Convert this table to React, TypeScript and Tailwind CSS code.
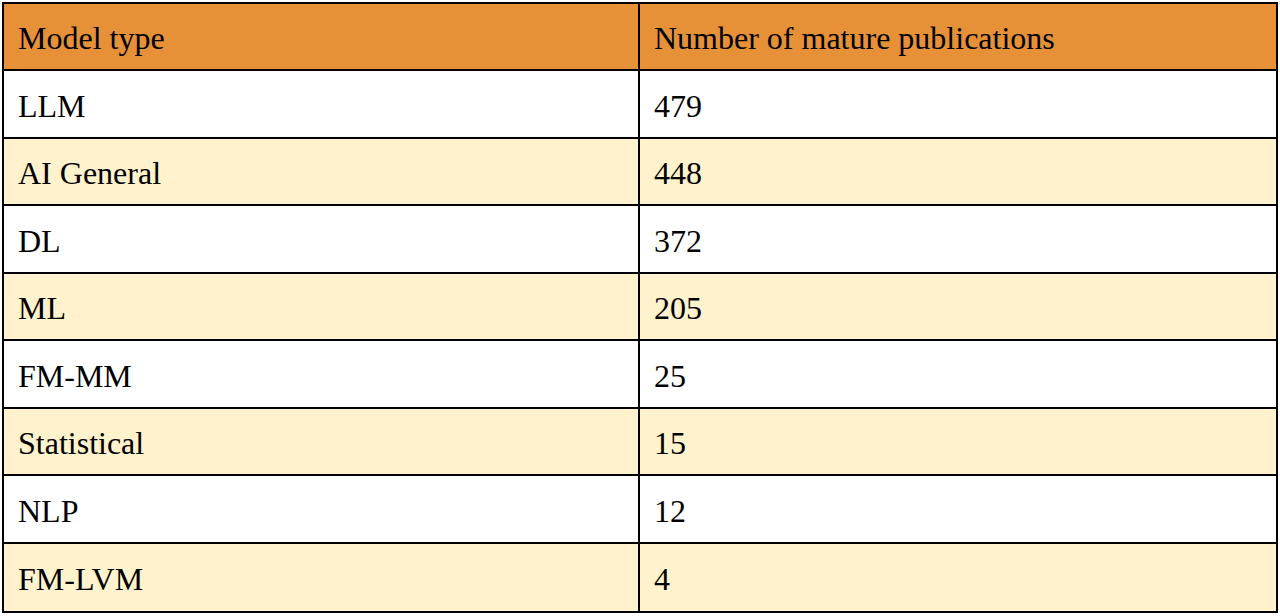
import React from "react";

const rows: [string, string][] = [
  ["LLM", "479"],
  ["AI General", "448"],
  ["DL", "372"],
  ["ML", "205"],
  ["FM-MM", "25"],
  ["Statistical", "15"],
  ["NLP", "12"],
  ["FM-LVM", "4"],
];

export default function App() {
  return (
    <div
      className="w-[1280px] h-[616px] bg-white pl-[2px] pt-[2px]"
      style={{ fontFamily: '"Liberation Serif", "Times New Roman", serif' }}
    >
      <div className="w-[1276px] border-2 border-black text-[32px] text-black leading-none">
        <div className="flex h-[67px] bg-[#e69138] border-b-2 border-black">
          <div className="w-[636px] border-r-2 border-black flex items-center pl-[14px] pt-[3px]">Model type</div>
          <div className="flex-1 flex items-center pl-[14px] pt-[3px]">Number of mature publications</div>
        </div>
        {rows.map(([a, b], i) => (
          <div
            key={a}
            className={`flex ${i % 2 === 0 ? "h-[68px]" : "h-[67px]"} ${i % 2 === 1 ? "bg-[#fff2cc]" : "bg-white"} ${i < rows.length - 1 ? "border-b-2 border-black" : ""}`}
          >
            <div className="w-[636px] border-r-2 border-black flex items-center pl-[14px] pt-[3px]">{a}</div>
            <div className="flex-1 flex items-center pl-[14px] pt-[3px]">{b}</div>
          </div>
        ))}
      </div>
    </div>
  );
}
